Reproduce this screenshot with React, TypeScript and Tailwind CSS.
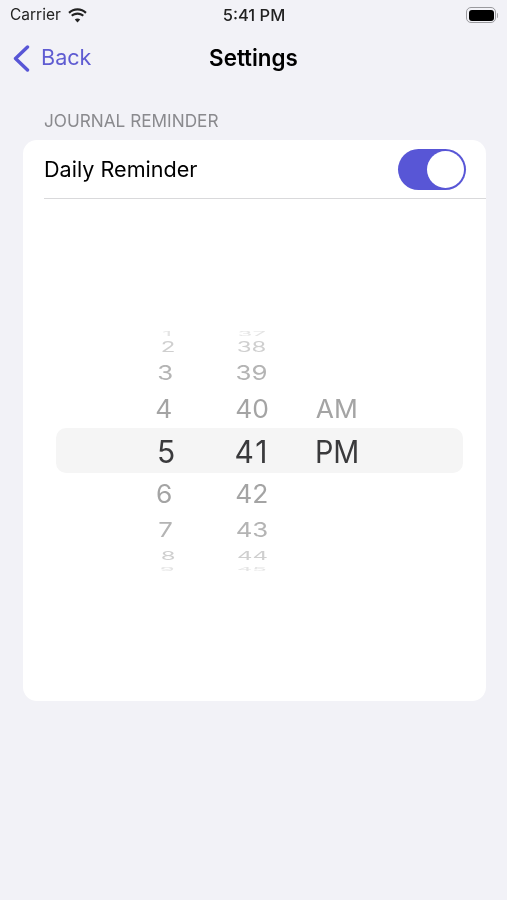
const rows = [
  { hour: "1", minute: "37", h: "h-[4px]", scale: "scale-x-[0.8] scale-y-[0.2]", color: "text-[#e4e4e4]", shift: "translate-x-[0px]" },
  { hour: "2", minute: "38", h: "h-[22px]", scale: "scale-x-[0.8] scale-y-[0.46]", color: "text-[#cfcfcf]", shift: "translate-x-[1px]" },
  { hour: "3", minute: "39", h: "h-[30px]", scale: "scale-x-[0.86] scale-y-[0.68]", color: "text-[#b4b4b4]", shift: "-translate-x-[2px]" },
  { hour: "4", minute: "40", h: "h-[42px]", scale: "scale-x-[0.88] scale-y-[0.84]", color: "text-[#a4a4a4]", shift: "-translate-x-[3px]" },
  { hour: "5", minute: "41", h: "h-[44px]", scale: "scale-y-[1.04] tracking-[2px]", color: "text-[#3a3a3c]", shift: "translate-x-[0px]" },
  { hour: "6", minute: "42", h: "h-[40px]", scale: "scale-x-[0.88] scale-y-[0.84]", color: "text-[#a4a4a4]", shift: "-translate-x-[3px]" },
  { hour: "7", minute: "43", h: "h-[32px]", scale: "scale-x-[0.86] scale-y-[0.68]", color: "text-[#b4b4b4]", shift: "-translate-x-[2px]" },
  { hour: "8", minute: "44", h: "h-[20px]", scale: "scale-x-[0.8] scale-y-[0.38]", color: "text-[#cfcfcf]", shift: "translate-x-[1px]" },
  { hour: "9", minute: "45", h: "h-[6px]", scale: "scale-x-[0.8] scale-y-[0.16]", color: "text-[#e4e4e4]", shift: "translate-x-[0px]" },
];

function BatteryIcon() {
  return (
    <div className="flex items-center">
      <div className="flex h-[16px] w-[30px] items-center justify-center rounded-[5px] border border-[#9a9a9e]">
        <div className="h-[11px] w-[25px] rounded-[3px] bg-black" />
      </div>
      <div className="ml-px h-[5px] w-[1px] rounded-r bg-[#a5a5a8]" />
    </div>
  );
}

function WifiIcon() {
  return (
    <svg width="21" height="15" viewBox="0 0 21 15" fill="#222">
      <path d="M10.5 2.6c3 0 5.7 1.2 7.7 3.1l1.5-1.6C17.3 1.8 14 .3 10.5.3S3.7 1.8 1.3 4.1l1.5 1.6c2-1.9 4.7-3.1 7.7-3.1z" />
      <path d="M10.5 6.7c1.9 0 3.6.7 4.9 1.9l1.6-1.6c-1.7-1.6-4-2.6-6.5-2.6S5.7 5.4 4 7l1.6 1.6c1.3-1.2 3-1.9 4.9-1.9z" />
      <path d="M10.5 10.4c-1 0-2 .4-2.7 1.1l2.7 3 2.7-3c-.7-.7-1.7-1.1-2.7-1.1z" />
    </svg>
  );
}

export default function App() {
  return (
    <div
      className="flex h-[900px] w-[507px] flex-col overflow-hidden bg-[#f2f2f7] blur-[0.4px]"
      style={{ fontFamily: "Inter, 'Liberation Sans', sans-serif" }}
    >
      {/* status bar */}
      <div className="grid h-[30px] grid-cols-3 items-center pl-[10px] pr-[9px] text-[15.5px] leading-none text-[#222]">
        <div className="flex items-center gap-[6px]">
          <span>Carrier</span>
          <WifiIcon />
        </div>
        <div className="text-center text-[16.5px] font-medium">5:41 PM</div>
        <div className="flex justify-end">
          <BatteryIcon />
        </div>
      </div>

      {/* nav bar */}
      <div className="grid h-[56px] grid-cols-3 items-center px-[13px]">
        <div className="flex items-center gap-[11px] text-[#5f5cd2]">
          <svg width="17" height="27" viewBox="0 0 17 27" fill="none" stroke="#5856d6" strokeWidth="3.4" strokeLinecap="round" strokeLinejoin="round">
            <path d="M14.5 2 L2.5 13.5 L14.5 25" />
          </svg>
          <span className="text-[21.6px] leading-none">Back</span>
        </div>
        <div className="whitespace-nowrap text-center text-[22.4px] font-semibold leading-none text-black">Settings</div>
        <div />
      </div>

      <div className="ml-[44px] mt-[25px] h-[20px] text-[17.2px] leading-[20px] text-[#8a8a8e]">JOURNAL REMINDER</div>

      {/* card */}
      <div className="ml-[23px] mt-[9px] flex h-[561px] w-[463px] flex-col rounded-[14px] bg-white">
        <div className="ml-[21px] flex h-[59px] items-center justify-between border-b border-[#d9d9db] pr-[20px]">
          <span className="pt-[2px] text-[21.6px] leading-none text-black">Daily Reminder</span>
          <div className="flex h-[41px] w-[68px] items-center justify-end rounded-full bg-[#5856d6] pr-[2px]">
            <div className="h-[37px] w-[37px] rounded-full bg-white" />
          </div>
        </div>

        {/* time picker */}
        <div className="relative mt-[132px] h-[240px] overflow-hidden">
          <div className="absolute left-[33px] top-[97px] h-[45px] w-[407px] rounded-[10px] bg-[#f5f5f5]" />
          <div className="relative flex pt-px text-[30px] leading-none">
            <div className="ml-[104px] w-[80px]">
              {rows.map((row) => (
                <div key={row.hour} className={`flex items-center justify-center ${row.h}`}>
                  <span className={`${row.scale} ${row.color} ${row.shift}`}>{row.hour}</span>
                </div>
              ))}
            </div>
            <div className="ml-[5px] w-[80px]">
              {rows.map((row) => (
                <div key={row.minute} className={`flex items-center justify-center ${row.h}`}>
                  <span className={`${row.scale} ${row.color}`}>{row.minute}</span>
                </div>
              ))}
            </div>
            <div className="ml-[5px] w-[80px]">
              <div className="h-[56px]" />
              <div className="flex h-[42px] items-center justify-center">
                <span className="scale-x-[0.88] scale-y-[0.84] text-[#a4a4a4]">AM</span>
              </div>
              <div className="flex h-[44px] items-center justify-center">
                <span className="scale-x-[0.96] scale-y-[1.04] text-[#3a3a3c]">PM</span>
              </div>
            </div>
          </div>
        </div>
      </div>
    </div>
  );
}
